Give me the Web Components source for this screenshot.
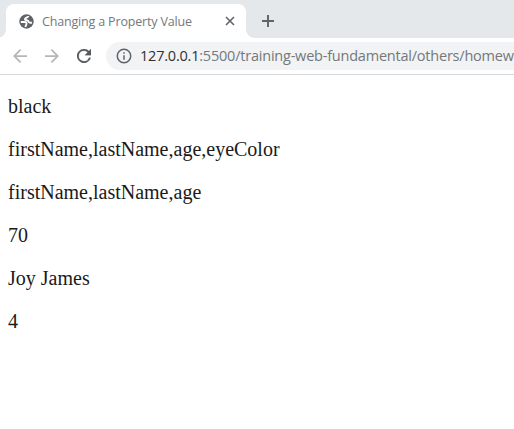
<!DOCTYPE html>
<html lang="en"><head><meta charset="utf-8"><title>Changing a Property Value</title>
<style>html,body{margin:0;height:100%;overflow:hidden;background:#fff}</style></head>
<body><browser-window></browser-window>
<script>
const define=(name,html)=>customElements.define(name,class extends HTMLElement{constructor(){super();this.attachShadow({mode:'open'}).innerHTML=html;}});
define('browser-tab',`<style>
:host{display:flex;align-items:center;position:relative;box-sizing:border-box;width:240px;height:34px;margin-left:6px;padding:0 10px 0 13px;background:#fff;border-radius:8px 8px 0 0;font:12.5px "Open Sans","Noto Sans",sans-serif;color:#74787c}
:host::before,:host::after{content:"";position:absolute;bottom:0;width:8px;height:8px}
:host::before{left:-8px;background:radial-gradient(circle at 0 0,transparent 7.5px,#fff 8px)}
:host::after{right:-8px;background:radial-gradient(circle at 100% 0,transparent 7.5px,#fff 8px)}
.title{display:block;margin-left:8px;flex:1;white-space:nowrap;letter-spacing:-.17px}
svg{flex:none}</style>
<svg width="15" height="15" viewBox="0 0 15 15"><circle cx="7.5" cy="7.5" r="7.2" fill="#5f6368"/><path fill="none" stroke="#fff" stroke-width="1.9" d="M9.300 2C9.300 3.700 6 3.500 5.900 5.200c0 1.500 3.300.6 3.600 2.200.2 1.200 2 1.500 3.400 1.100M1.800 8h3.600c1.500 0 2.400.8 2.100 2L6.300 13"/></svg>
<span class="title"><slot></slot></span>
<svg width="12" height="12" viewBox="0 0 12 12" stroke="#5f6368" stroke-width="1.6"><path d="M2 2l8 8M10 2l-8 8"/></svg>`);
define('tab-strip',`<style>:host{display:flex;height:38px;padding-top:4px;box-sizing:border-box;background:#e5e8eb}svg{margin:10px 0 0 15px}</style>
<slot></slot><svg width="14" height="14" viewBox="0 0 14 14" stroke="#5f6368" stroke-width="1.9"><path d="M7 1v12M1 7h12"/></svg>`);
define('tool-bar',`<style>:host{display:flex;align-items:center;box-sizing:border-box;height:37px;border-bottom:1px solid #d8d9da;padding-left:13px;background:#fff}
svg{flex:none;margin-right:18px}
.url{display:flex;align-items:center;width:500px;flex:none;height:28px;border-radius:14px;background:#f1f3f4;padding-left:10px;box-sizing:border-box;font:14.5px "Open Sans","Noto Sans",sans-serif;color:#74787c;white-space:nowrap;letter-spacing:-.215px}
.url svg{margin-right:8px}.url span{padding-bottom:2px}::slotted(b){font-weight:400;color:#303135}</style>
<svg width="14" height="14" viewBox="4 4 16 16"><path fill="#b4b6b8" d="M20 11H7.830l5.590-5.590L12 4l-8 8 8 8 1.410-1.410L7.830 13H20z"/></svg>
<svg width="14" height="14" viewBox="4 4 16 16"><path fill="#b4b6b8" d="M12 4l-1.410 1.410L16.170 11H4v2h12.170l-5.580 5.590L12 20l8-8z"/></svg>
<svg style="margin-right:15px" width="14" height="14" viewBox="4 4 16 16"><path fill="#55595d" stroke="#55595d" stroke-width=".3" d="M17.650 6.350A8 8 0 1 0 19.730 14h-2.080A6 6 0 1 1 12 6c1.660 0 3.140.69 4.220 1.780L13 11h7V4z"/></svg>
<div class="url"><svg width="16" height="16" viewBox="1.3 1.3 21.4 21.4"><path fill="#5f6368" d="M11 7h2v2h-2zm0 4h2v6h-2zm1-9a10 10 0 1 0 0 20 10 10 0 0 0 0-20zm0 18a8 8 0 1 1 0-16 8 8 0 0 1 0 16z"/></svg><span><slot></slot></span></div>`);
define('page-content',`<style>:host{display:flex;flex-direction:column;gap:20px;padding:20px 8px;font:20px/23px "Liberation Serif",serif;color:#1a1a1a}</style><slot></slot>`);
define('browser-window',`<style>:host{display:block;width:514px;height:429px;overflow:hidden;background:#fff}p{margin:0}</style>
<tab-strip><browser-tab>Changing a Property Value</browser-tab></tab-strip>
<tool-bar><b>127.0.0.1</b>:5500/training-web-fundamental/others/homew</tool-bar>
<page-content><p>black</p><p>firstName,lastName,age,eyeColor</p><p>firstName,lastName,age</p><p>70</p><p>Joy James</p><p>4</p></page-content>`);
</script></body></html>
